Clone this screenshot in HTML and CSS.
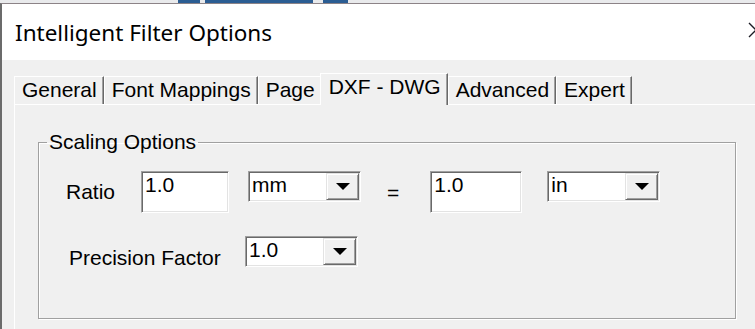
FILE: index.html
```html
<!DOCTYPE html>
<html lang="en">
<head>
    <meta charset="UTF-8">
    <title>Intelligent Filter Options</title>
    <link rel="stylesheet" href="styles.css">
</head>
<body>
    <div class="backdrop">
        <span class="bd-link bd-a"></span>
        <span class="bd-link bd-b"></span>
        <span class="bd-link bd-c"></span>
    </div>

    <div class="dialog">
        <div class="titlebar">
            <span class="title">Intelligent Filter Options</span>
            <svg class="close" width="16" height="16" viewBox="0 0 16 16">
                <path d="M1 1 L15 15 M15 1 L1 15" stroke="#1b1b24" stroke-width="1.4" fill="none"/>
            </svg>
        </div>

        <div class="client">
            <div class="tabs">
                <div class="tab">General</div>
                <div class="tab">Font Mappings</div>
                <div class="tab tab-before">Page</div>
                <div class="tab tab-active">DXF - DWG</div>
                <div class="tab">Advanced</div>
                <div class="tab">Expert</div>
            </div>

            <div class="panel">
                <fieldset class="group">
                    <legend>Scaling Options</legend>

                    <div class="row row-ratio">
                        <span class="label label-ratio">Ratio</span>
                        <div class="edit">1.0</div>
                        <div class="combo combo-from">
                            <span class="combo-text">mm</span>
                            <span class="combo-btn"><span class="arrow"></span></span>
                        </div>
                        <span class="equals">=</span>
                        <div class="edit edit-to">1.0</div>
                        <div class="combo combo-to">
                            <span class="combo-text">in</span>
                            <span class="combo-btn"><span class="arrow"></span></span>
                        </div>
                    </div>

                    <div class="row row-precision">
                        <span class="label label-precision">Precision Factor</span>
                        <div class="combo combo-precision">
                            <span class="combo-text">1.0</span>
                            <span class="combo-btn"><span class="arrow"></span></span>
                        </div>
                    </div>
                </fieldset>
            </div>
        </div>
    </div>
</body>
</html>
```

FILE: styles.css
```css
html, body {
    margin: 0;
    padding: 0;
    height: 329px;
    overflow: hidden;
    background-color: #f0f0f0;
    font-family: "Liberation Sans", Arial, sans-serif;
    color: #000;
}

/* strip of the window behind the dialog */
.backdrop {
    display: flex;
    height: 3px;
    background-color: #e9eaec;
}

.bd-link {
    height: 3px;
    background-color: #2b5d93;
}

.bd-a {
    margin-left: 178px;
    width: 22px;
}

.bd-b {
    margin-left: 5px;
    width: 108px;
}

.bd-c {
    margin-left: 10px;
    width: 25px;
}

.dialog {
    width: 773px;
    border-top: 1px solid #8c8387;
    border-left: 2px solid #6b6b6b;
    background-color: #f0f0f0;
}

.titlebar {
    display: flex;
    align-items: center;
    justify-content: space-between;
    height: 56px;
    padding: 0 11px 0 13px;
    background-color: #fff;
}

.title {
    font-family: "Noto Sans", "Open Sans", sans-serif;
    font-size: 22.5px;
    color: #000;
}

.close {
    display: block;
    margin-top: -4px;
}

.client {
    padding: 13px 0 0 12px;
}

/* tab strip */
.tabs {
    display: flex;
    align-items: flex-end;
    height: 31px;
}

.tab {
    position: relative;
    box-sizing: border-box;
    height: 28px;
    padding: 0 6px 0 7px;
    border-top: 1px solid #fff;
    border-left: 1px solid #fff;
    border-right: 1px solid #696969;
    box-shadow: inset -1px 0 0 #a0a0a0;
    font-size: 21px;
    line-height: 26px;
    white-space: nowrap;
}

.tab-active {
    z-index: 2;
    height: 32px;
    margin: 0 0 -1px -2px;
    padding: 0 6px 0 8px;
    background-color: #f0f0f0;
}

.panel {
    position: relative;
    z-index: 1;
    height: 199px;
    padding: 25px 0 0 23px;
    border-top: 1px solid #fff;
    border-left: 1px solid #fff;
}

/* group box */
.group {
    box-sizing: border-box;
    width: 698px;
    margin: 0;
    padding: 17px 0 48px 0;
    border: 1px solid #a0a0a0;
    box-shadow: 1px 1px 0 #fff, inset 1px 1px 0 #fff;
}

.group legend {
    margin-left: 8px;
    padding: 0 2px;
    font-size: 21px;
    line-height: 24px;
}

.row {
    display: flex;
    align-items: flex-start;
}

.label {
    font-size: 21px;
    line-height: 24px;
    white-space: nowrap;
}

.label-ratio {
    width: 75px;
    margin: 9px 0 0 27px;
}

.row-precision {
    margin-top: 23px;
}

.label-precision {
    width: 176px;
    margin: 10px 0 0 30px;
}

/* sunken edit box */
.edit {
    box-sizing: border-box;
    width: 88px;
    height: 42px;
    padding: 1px 3px;
    background-color: #fff;
    border-top: 1px solid #a0a0a0;
    border-left: 1px solid #a0a0a0;
    border-bottom: 1px solid #fff;
    border-right: 1px solid #fff;
    box-shadow: inset 1px 1px 0 #696969, inset -1px -1px 0 #e3e3e3;
    font-size: 21px;
    line-height: 24px;
}

.edit-to {
    width: 92px;
    margin-left: 31px;
}

.equals {
    margin: 10px 0 0 26px;
    font-size: 21px;
    line-height: 24px;
}

/* drop-down list */
.combo {
    box-sizing: border-box;
    display: flex;
    justify-content: space-between;
    width: 113px;
    height: 31px;
    padding: 1px 1px 1px 3px;
    background-color: #fff;
    border-top: 1px solid #a0a0a0;
    border-left: 1px solid #a0a0a0;
    border-bottom: 1px solid #fff;
    border-right: 1px solid #fff;
    box-shadow: inset 1px 1px 0 #696969, inset -1px -1px 0 #e3e3e3;
}

.combo-from {
    margin-left: 19px;
}

.combo-to {
    margin-left: 25px;
}

.combo-precision {
    margin-left: 0;
}

.combo-text {
    font-size: 21px;
    line-height: 24px;
}

.combo-btn {
    box-sizing: border-box;
    display: flex;
    align-items: center;
    justify-content: center;
    width: 33px;
    height: 27px;
    background-color: #f0f0f0;
    border-top: 1px solid #e3e3e3;
    border-left: 1px solid #e3e3e3;
    border-bottom: 1px solid #696969;
    border-right: 1px solid #696969;
    box-shadow: inset 1px 1px 0 #fff, inset -1px -1px 0 #a0a0a0;
}

.arrow {
    width: 0;
    height: 0;
    border-left: 7px solid transparent;
    border-right: 7px solid transparent;
    border-top: 7px solid #000;
}
```
